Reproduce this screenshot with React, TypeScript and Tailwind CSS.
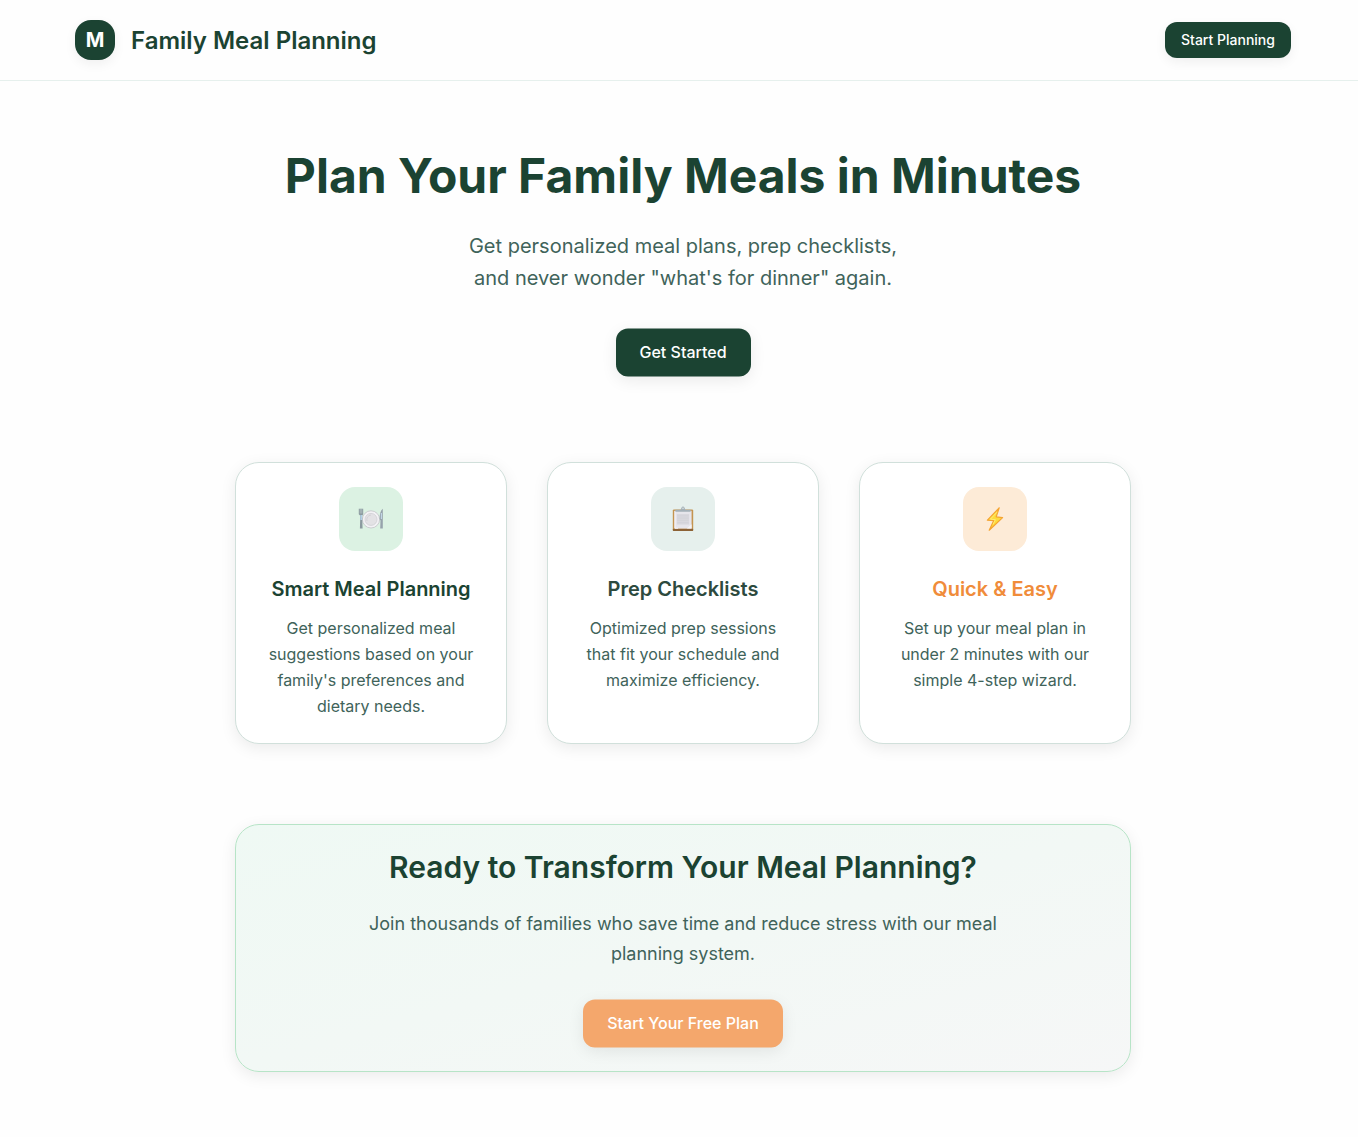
import type { ReactNode } from "react";

function PlateIcon() {
  return (
    <svg width="26" height="22" viewBox="0 0 26 22" fill="none">
      <circle cx="13" cy="11.4" r="8.6" fill="#f3f2f5" stroke="#c3c3c8" strokeWidth="0.8" />
      <circle cx="13" cy="11.4" r="6" fill="#e3e2e5" stroke="#d0cfd4" strokeWidth="0.8" />
      <path d="M9 13a4.6 4.6 0 0 1 4-6" stroke="#d3d2d7" strokeWidth="1" />
      <path d="M.8.8h4.4v5.4L4.1 7.8l.5 12.8H1.9l.4-12.8L.8 6.2z" fill="#8b9a9f" />
      <path d="M2.2 1v4.5M3.8 1v4.5" stroke="#cfdcdc" strokeWidth="0.5" />
      <path d="M3.2 7v5" stroke="#b5d3ec" strokeWidth="1.5" />
      <path d="M24.8.8v19.8h-2.6l.3-8.1-.9-1.2C21.6 6 22.6 2.4 24.8.8z" fill="#97a3ac" />
      <path d="M23.4 5v6" stroke="#c3d8e8" strokeWidth="1.1" />
    </svg>
  );
}

function ClipboardIcon() {
  return (
    <svg width="22" height="26" viewBox="0 0 22 26" fill="none">
      <rect x="0.8" y="3.4" width="20.4" height="21.6" rx="1.2" fill="#c4944f" />
      <rect x="0.8" y="22.8" width="20.4" height="2.2" rx="0.8" fill="#8c6236" />
      <rect x="2.4" y="4.8" width="17.2" height="17.8" fill="#e6e5eb" />
      <path d="M3 5v17.2h3" stroke="#f5f4f9" strokeWidth="1" />
      <rect x="4.8" y="8" width="12.4" height="10.6" fill="#d9d8de" />
      <path d="M5.4 9.8h11.2M5.4 12.1h11.2M5.4 14.4h11.2M5.4 16.7h11.2" stroke="#cfced5" strokeWidth="0.6" />
      <path d="M14.8 22.6h4.8v-4.4z" fill="#f4f3f8" />
      <path d="M3.4 3.8h5.2L9.6 1.4a1.6 1.6 0 0 1 2.8 0l1 2.4h5.2v1.9H3.4z" fill="#a4b0b8" />
      <circle cx="11" cy="2.3" r="0.7" fill="#e6efec" />
    </svg>
  );
}

function BoltIcon() {
  return (
    <svg width="18" height="26" viewBox="0 0 18 26" fill="none">
      <path
        d="M13.2 1.8 1.4 14.2l6.4.4L3.2 24.2 16.6 11.6l-6.4-.8z"
        fill="#fddc3c"
        stroke="#f5a433"
        strokeWidth="1.2"
        strokeLinejoin="round"
      />
      <path d="M11 6.2 4.4 13.2l5 .5-2.4 4.7" stroke="#ffef80" strokeWidth="0.8" />
    </svg>
  );
}

type FeatureProps = {
  icon: ReactNode;
  tile: string;
  title: string;
  titleColor: string;
  lines: string[];
};

const features: FeatureProps[] = [
  {
    icon: <PlateIcon />,
    tile: "bg-[#dcf2e3]",
    title: "Smart Meal Planning",
    titleColor: "text-[#1b4332]",
    lines: ["Get personalized meal", "suggestions based on your", "family's preferences and", "dietary needs."],
  },
  {
    icon: <ClipboardIcon />,
    tile: "bg-[#e6f0ed]",
    title: "Prep Checklists",
    titleColor: "text-[#2d4a3e]",
    lines: ["Optimized prep sessions", "that fit your schedule and", "maximize efficiency."],
  },
  {
    icon: <BoltIcon />,
    tile: "bg-[#fdebd7]",
    title: "Quick & Easy",
    titleColor: "text-[#f08c3a]",
    lines: ["Set up your meal plan in", "under 2 minutes with our", "simple 4-step wizard."],
  },
];

function Feature({ icon, tile, title, titleColor, lines }: FeatureProps) {
  return (
    <div className="flex h-[282px] flex-col items-center rounded-[24px] border border-[#d1e0db] bg-white pt-6 text-center shadow-[0_4px_16px_rgba(0,0,0,0.08)]">
      <div className={`flex size-16 shrink-0 items-center justify-center rounded-2xl ${tile}`}>{icon}</div>
      <h3 className={`mt-6 text-[20px] leading-7 font-semibold ${titleColor}`}>{title}</h3>
      <p className="mt-3 text-[16px] leading-[26px] text-[#40635a]">
        {lines.map((line) => (
          <span key={line} className="block whitespace-nowrap">
            {line}
          </span>
        ))}
      </p>
    </div>
  );
}

export default function App() {
  return (
    <div className="h-[1137px] w-full overflow-hidden bg-[#fefefe] font-['Inter',sans-serif] text-[#1b4332] antialiased">
      <div className="w-[1366px]">
        <header className="h-[81px] border-b border-[#e6f0ed]">
          <div className="mx-auto flex h-20 w-[1216px] items-center justify-between">
            <div className="flex items-center gap-4">
              <div className="flex size-10 items-center justify-center rounded-2xl bg-[#1b4332] text-[20px] font-bold text-white shadow-[0_4px_12px_rgba(0,0,0,0.06)]">
                M
              </div>
              <span className="pt-0.5 text-[24px] leading-8 font-semibold">Family Meal Planning</span>
            </div>
            <button className="h-9 w-[126px] rounded-xl bg-[#1b4332] pb-0.5 text-[14px] font-medium text-white shadow-[0_4px_12px_rgba(0,0,0,0.06)]">
              Start Planning
            </button>
          </div>
        </header>

        <main className="mx-auto flex w-[896px] flex-col items-center pt-[65px]">
          <h1 className="text-[48px] leading-[60px] font-bold whitespace-nowrap">Plan Your Family Meals in Minutes</h1>
          <p className="mt-6 text-center text-[20px] leading-8 text-[#40635a]">
            Get personalized meal plans, prep checklists,
            <br />
            and never wonder "what's for dinner" again.
          </p>
          <button className="mt-[34px] h-12 w-[135px] translate-y-[0.5px] rounded-xl bg-[#1b4332] pb-[3px] text-[16px] font-medium text-white shadow-[0_4px_16px_rgba(0,0,0,0.08)]">
            Get Started
          </button>

          <section className="mt-[86px] grid w-full grid-cols-3 gap-10">
            {features.map((feature) => (
              <Feature key={feature.title} {...feature} />
            ))}
          </section>

          <section className="mt-20 flex h-[248px] w-full flex-col items-center rounded-[24px] border border-[#b7e4c7] bg-[linear-gradient(165deg,#eff9f4_0%,#f2f8f5_50%,#f6f7f7_100%)] pt-6 text-center shadow-[0_4px_16px_rgba(0,0,0,0.08)]">
            <h2 className="text-[30px] leading-9 font-semibold">Ready to Transform Your Meal Planning?</h2>
            <p className="mt-6 text-[18px] leading-[30px] text-[#40635a]">
              Join thousands of families who save time and reduce stress with our meal
              <br />
              planning system.
            </p>
            <button className="mt-[30px] h-12 w-[200px] translate-y-[0.5px] rounded-xl bg-[#f4a76c] pb-[3px] text-[16px] font-medium text-white shadow-[0_4px_16px_rgba(0,0,0,0.08)]">
              Start Your Free Plan
            </button>
          </section>
        </main>
      </div>
    </div>
  );
}
